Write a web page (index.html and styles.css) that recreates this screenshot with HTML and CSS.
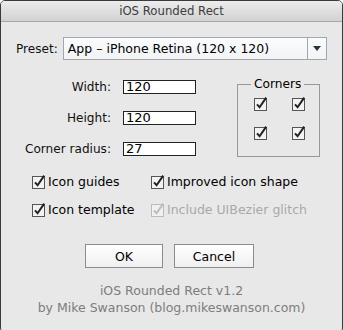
FILE: index.html
```html
<!DOCTYPE html>
<html lang="en">

<head>
    <meta charset="UTF-8">
    <meta name="viewport" content="width=device-width, initial-scale=1.0">
    <title>iOS Rounded Rect</title>
    <link rel="stylesheet" href="styles.css">
</head>

<body>
    <div class="window">
        <div class="titlebar">iOS Rounded Rect</div>

        <div class="content">
            <div class="preset-row">
                <span class="label">Preset:</span>
                <div class="select">
                    <span class="select-text">App – iPhone Retina (120 x 120)</span>
                    <span class="select-arrow">
                        <svg width="8" height="5" viewBox="0 0 8 5"><path d="M0 0 H8 L4 5 Z" fill="#333"/></svg>
                    </span>
                </div>
            </div>

            <div class="middle">
                <div class="fields">
                    <span class="label">Width:</span>
                    <div class="field">120</div>
                    <span class="label">Height:</span>
                    <div class="field">120</div>
                    <span class="label">Corner radius:</span>
                    <div class="field">27</div>
                </div>

                <fieldset class="corners">
                    <legend>Corners</legend>
                    <div class="corner-grid">
                        <svg class="cb" viewBox="0 0 15 15"><rect x="0.5" y="2.5" width="12" height="12"/><path d="M3 8.3 L5.6 11.2 L12.2 1.6"/></svg>
                        <svg class="cb" viewBox="0 0 15 15"><rect x="0.5" y="2.5" width="12" height="12"/><path d="M3 8.3 L5.6 11.2 L12.2 1.6"/></svg>
                        <svg class="cb" viewBox="0 0 15 15"><rect x="0.5" y="2.5" width="12" height="12"/><path d="M3 8.3 L5.6 11.2 L12.2 1.6"/></svg>
                        <svg class="cb" viewBox="0 0 15 15"><rect x="0.5" y="2.5" width="12" height="12"/><path d="M3 8.3 L5.6 11.2 L12.2 1.6"/></svg>
                    </div>
                </fieldset>
            </div>

            <div class="options">
                <div class="option">
                    <svg class="cb" viewBox="0 0 15 15"><rect x="0.5" y="2.5" width="12" height="12"/><path d="M3 8.3 L5.6 11.2 L12.2 1.6"/></svg>
                    <span>Icon guides</span>
                </div>
                <div class="option">
                    <svg class="cb" viewBox="0 0 15 15"><rect x="0.5" y="2.5" width="12" height="12"/><path d="M3 8.3 L5.6 11.2 L12.2 1.6"/></svg>
                    <span>Improved icon shape</span>
                </div>
                <div class="option">
                    <svg class="cb" viewBox="0 0 15 15"><rect x="0.5" y="2.5" width="12" height="12"/><path d="M3 8.3 L5.6 11.2 L12.2 1.6"/></svg>
                    <span>Icon template</span>
                </div>
                <div class="option disabled">
                    <svg class="cb" viewBox="0 0 15 15"><rect x="0.5" y="2.5" width="12" height="12"/><path d="M3 8.3 L5.6 11.2 L12.2 1.6"/></svg>
                    <span>Include UIBezier glitch</span>
                </div>
            </div>

            <div class="buttons">
                <button type="button" class="button ok">OK</button>
                <button type="button" class="button cancel">Cancel</button>
            </div>

            <div class="footer">
                <p>iOS Rounded Rect v1.2</p>
                <p>by Mike Swanson (blog.mikeswanson.com)</p>
            </div>
        </div>
    </div>
</body>

</html>
```

FILE: styles.css
```css
* {
    box-sizing: border-box;
    margin: 0;
    padding: 0;
}

body {
    font-family: 'DejaVu Sans', 'Liberation Sans', sans-serif;
    font-size: 12px;
    color: #111;
    background-color: #fff;
}

.window {
    width: 343px;
    height: 333px;
    background-color: #e8e8e8;
    border: 1px solid #3a3a3a;
    border-radius: 5px;
    overflow: hidden;
}

.titlebar {
    height: 21px;
    line-height: 21px;
    text-align: center;
    font-size: 11.7px;
    color: #3c3c3c;
    background: linear-gradient(#ececec, #d2d2d2);
    border-bottom: 1px solid #a8a8a8;
}

.content {
    padding: 15px 15px 0 15px;
}

.label {
    color: #111;
    font-size: 12.1px;
}

/* preset */

.preset-row {
    display: flex;
    align-items: center;
    gap: 5px;
}

.select {
    display: flex;
    width: 264px;
    height: 23px;
    background: linear-gradient(#fbfcfd, #f1f3f6);
    border: 1px solid #9aa8bd;
}

.select-text {
    flex: 1;
    padding-left: 4px;
    line-height: 21px;
    font-size: 12.5px;
    color: #000;
}

.select-arrow {
    width: 19px;
    border-left: 1px solid #9aa8bd;
    display: flex;
    justify-content: center;
    align-items: center;
}

/* size fields + corners */

.middle {
    display: flex;
    margin-top: 17px;
}

.fields {
    display: grid;
    grid-template-columns: 95px 73px;
    column-gap: 12px;
    row-gap: 16px;
    align-items: center;
    margin-top: 2px;
}

.fields .label {
    text-align: right;
}

.field {
    height: 14px;
    line-height: 12px;
    padding-left: 2px;
    font-size: 13px;
    color: #000;
    background-color: #fff;
    border: 1px solid #222;
}

.corners {
    margin-left: 41px;
    width: 83px;
    height: 80px;
    border: 1px solid #999;
    padding: 0;
}

.corners legend {
    margin-left: 13px;
    padding: 0 3px;
    font-size: 12.2px;
    color: #000;
}

.corner-grid {
    display: grid;
    grid-template-columns: 15px 15px;
    column-gap: 23px;
    row-gap: 14px;
    padding: 5px 0 0 16px;
}

.cb {
    width: 15px;
    height: 15px;
    display: block;
}

.cb rect {
    fill: #f3f3f3;
    stroke: #555;
}

.cb path {
    fill: none;
    stroke: #222;
    stroke-width: 2;
}

/* options */

.options {
    display: grid;
    grid-template-columns: 119px auto;
    row-gap: 13px;
    margin-top: 17px;
    padding-left: 16px;
}

.option {
    display: flex;
    align-items: center;
    gap: 1px;
    font-size: 12.5px;
    color: #000;
}

.option.disabled {
    color: #a8a8a8;
}

.option.disabled .cb rect {
    stroke: #bbb;
    fill: #f0f0f0;
}

.option.disabled .cb path {
    stroke: #bbb;
}

/* buttons */

.buttons {
    display: flex;
    justify-content: center;
    gap: 11px;
    margin-top: 27px;
    padding-right: 4px;
}

.button {
    height: 24px;
    font-family: inherit;
    font-size: 12.5px;
    color: #000;
    background: linear-gradient(#fefefe, #f0f0f0);
    border: 1px solid #8c8c8c;
}

.button.ok {
    width: 78px;
}

.button.cancel {
    width: 80px;
}

/* footer */

.footer {
    margin-top: 14px;
    text-align: center;
    color: #7d7d7d;
    font-size: 12.5px;
    line-height: 17px;
}
```
